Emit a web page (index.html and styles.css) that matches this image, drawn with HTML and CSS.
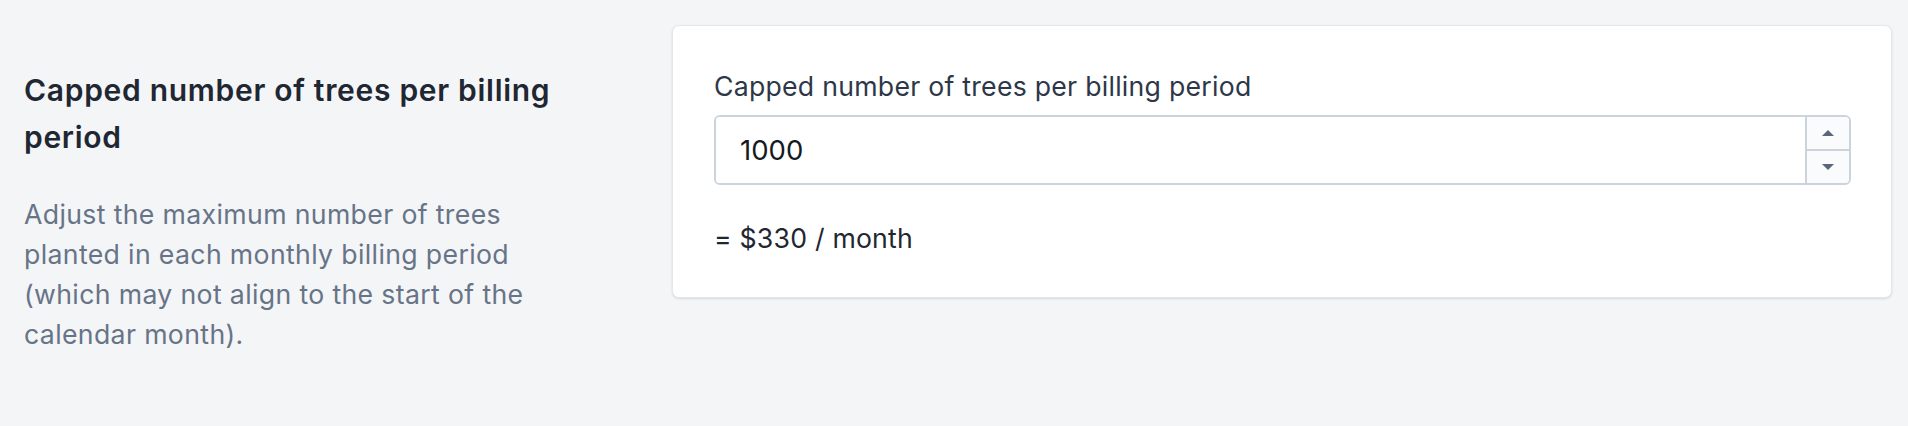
FILE: index.html
```html
<!DOCTYPE html>
<html lang="en">
<head>
<meta charset="utf-8">
<title>Capped number of trees</title>
<link rel="stylesheet" href="styles.css">
</head>
<body>
<div class="page">
  <div class="intro">
    <h2 class="intro-title">Capped number of trees per billing period</h2>
    <p class="intro-text">Adjust the maximum number of trees planted in each monthly billing period (which may not align to the start of the calendar month).</p>
  </div>
  <div class="card">
    <label class="field-label" for="cap">Capped number of trees per billing period</label>
    <div class="number-field">
      <input class="number-input" id="cap" type="text" value="1000">
      <div class="spinner">
        <span class="spin-btn"><svg width="12" height="6" viewBox="0 0 12 6"><path d="M6 0L12 6H0Z" fill="#5b6779"/></svg></span>
        <span class="spin-btn spin-down"><svg width="12" height="6" viewBox="0 0 12 6"><path d="M0 0H12L6 6Z" fill="#5b6779"/></svg></span>
      </div>
    </div>
    <p class="price">= $330 / month</p>
  </div>
</div>
</body>
</html>
```

FILE: styles.css
```css
* { box-sizing: border-box; }
html, body { margin: 0; padding: 0; }
body {
  background: #f4f5f7;
  font-family: Inter, "Noto Sans", "Liberation Sans", sans-serif;
  color: #2d3748;
  width: 1908px;
  height: 426px;
  overflow: hidden;
}
.page {
  display: grid;
  grid-template-columns: 572px 1fr;
  column-gap: 76px;
  padding: 25px 16px 0 24px;
  align-items: start;
}
.intro { padding-top: 42px; }
.intro-title {
  margin: 0;
  font-size: 30px;
  line-height: 47px;
  font-weight: 600;
  letter-spacing: 0.7px;
  color: #1f2733;
}
.intro-text {
  margin: 33px 0 0;
  font-size: 26.67px;
  line-height: 40px;
  color: #677487;
  letter-spacing: 0.35px;
}
.card {
  background: #fff;
  border: 1px solid #e4e7eb;
  border-radius: 7px;
  box-shadow: 0 1px 3px rgba(0,0,0,0.08), 0 1px 2px rgba(0,0,0,0.04);
  padding: 40px 40px 39px 41px;
}
.field-label {
  display: block;
  font-size: 26.67px;
  line-height: 40px;
  letter-spacing: 0.25px;
  color: #2d3748;
}
.number-field {
  margin-top: 9px;
  display: flex;
  height: 70px;
  border: 2px solid #cbd3dd;
  border-radius: 6px;
  overflow: hidden;
}
.number-input {
  flex: 1;
  min-width: 0;
  border: 0;
  outline: none;
  padding: 0 0 0 24px;
  font-family: inherit;
  font-size: 27.5px;
  color: #141a24;
  background: #fff;
}
.spinner {
  width: 44px;
  display: flex;
  flex-direction: column;
  border-left: 2px solid #cbd3dd;
  background: #fafbfc;
}
.spin-btn {
  flex: 1;
  display: flex;
  align-items: center;
  justify-content: center;
}
.spin-down { border-top: 2px solid #cbd3dd; }
.price {
  margin: 33px 0 0;
  font-size: 26.67px;
  line-height: 40px;
  letter-spacing: 0.2px;
  color: #1f2733;
}
```
